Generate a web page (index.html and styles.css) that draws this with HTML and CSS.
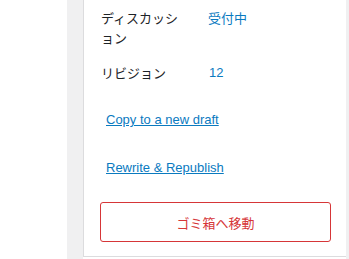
FILE: index.html
```html
<!DOCTYPE html>
<html lang="ja">
<head>
<meta charset="utf-8">
<link rel="stylesheet" href="styles.css">
</head>
<body>
<div class="page">
  <div class="blank"></div>
  <div class="strip"></div>
  <div class="panel">
    <div class="row">
      <div class="label">ディスカッション</div>
      <div class="value">受付中</div>
    </div>
    <div class="row row2">
      <div class="label">リビジョン</div>
      <div class="value num">12</div>
    </div>
    <a class="link link1" href="#">Copy to a new draft</a>
    <a class="link link2" href="#">Rewrite &amp; Republish</a>
    <button class="trash">ゴミ箱へ移動</button>
  </div>
  <div class="rstrip"></div>
</div>
</body>
</html>
```
FILE: styles.css
```css
html, body {
  margin: 0;
  padding: 0;
  background: #fff;
}
.page {
  display: flex;
  width: 349px;
  height: 259px;
  overflow: hidden;
  font-family: "Liberation Sans", "Noto Sans CJK JP", sans-serif;
  font-size: 13px;
  color: #1d2327;
}
.blank {
  width: 67px;
  flex: none;
  background: #fff;
}
.strip {
  width: 16px;
  flex: none;
  background: #f0f0f1;
}
.rstrip {
  flex: 1;
  background: #f0f0f1;
}
.panel {
  width: 263px;
  flex: none;
  height: 257px;
  box-sizing: border-box;
  border-left: 1px solid #dcdcde;
  border-bottom: 1px solid #dcdcde;
  background: #fff;
  padding: 8px 0 0 17px;
  display: flex;
  flex-direction: column;
  align-items: flex-start;
}
.row {
  display: flex;
  line-height: 20px;
}
.row2 {
  margin-top: 15px;
}
.label {
  width: 84px;
  padding-right: 23px;
  font-family: "Noto Sans CJK JP", sans-serif;
  line-break: normal;
}
.value {
  color: #0a7abf;
  font-family: "Noto Sans CJK JP", sans-serif;
}
.num {
  font-family: "Liberation Sans", sans-serif;
  padding-left: 1px;
}
.link {
  color: #0a7abf;
  text-decoration: underline;
  line-height: 20px;
  margin-left: 5px;
}
.link1 {
  margin-top: 27px;
}
.link2 {
  margin-top: 28px;
}
.trash {
  margin-top: 24px;
  margin-left: -1px;
  width: 231px;
  height: 40px;
  box-sizing: border-box;
  border: 1px solid #d63638;
  border-radius: 3px;
  background: #fff;
  color: #d63638;
  font-family: "Noto Sans CJK JP", sans-serif;
  font-size: 13px;
  padding: 0;
}
```
